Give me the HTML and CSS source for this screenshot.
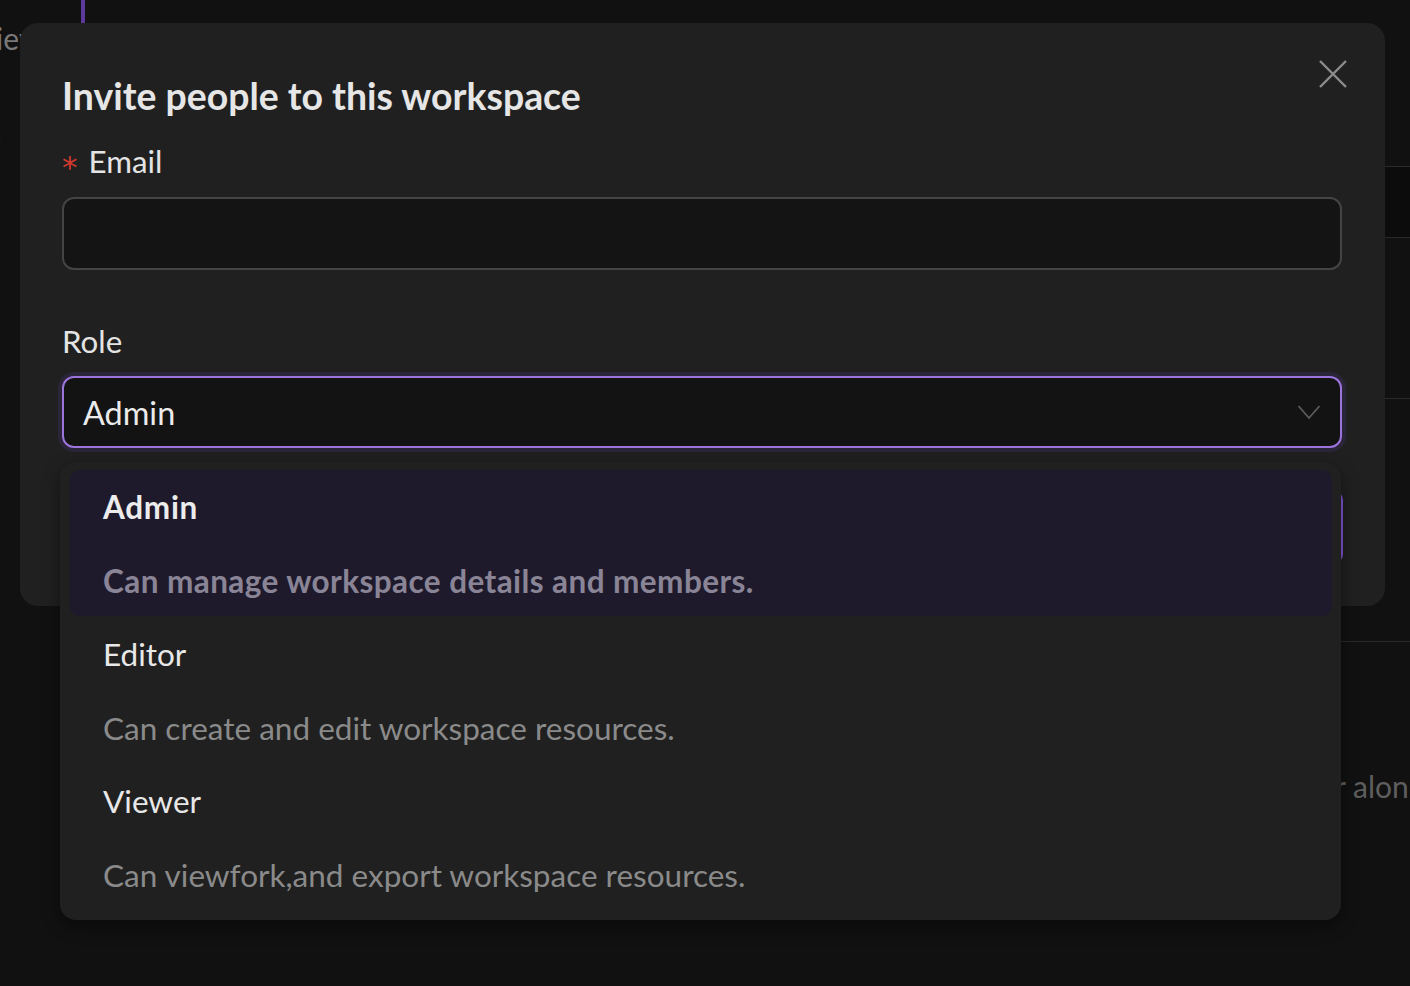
FILE: index.html
```html
<!DOCTYPE html>
<html lang="en">
<head>
<meta charset="utf-8">
<title>Invite people</title>
<link rel="stylesheet" href="styles.css">
</head>
<body>
<div class="backdrop">
  <div class="bg-accent"></div>
  <div class="bg-text bg-text-1">iew</div>
  <div class="bg-text bg-text-2">s</div>
  <div class="bg-panel"></div>
  <div class="bg-line bg-line-1"></div>
  <div class="bg-line bg-line-2"></div>
  <div class="bg-text bg-text-3">r alon</div>
</div>

<div class="modal">
  <button class="close" aria-label="Close">
    <svg width="28" height="28" viewBox="0 0 28 28"><path d="M1 1 L27 27 M27 1 L1 27" stroke="#8c8c8c" stroke-width="2.4" fill="none"/></svg>
  </button>
  <h1 class="title">Invite people to this workspace</h1>
  <label class="label"><span class="req">*</span>Email</label>
  <div class="input"></div>
  <label class="label label-role">Role</label>
  <div class="select">
    <span class="select-value">Admin</span>
    <svg class="chevron" width="24" height="16" viewBox="0 0 24 16"><path d="M1.5 2 L12 14 L22.5 2" stroke="#5c5c5c" stroke-width="1.8" fill="none"/></svg>
  </div>
  <button class="submit">Send invite</button>
</div>

<div class="dropdown">
  <div class="option active">
    <div class="opt-title">Admin</div>
    <div class="opt-desc">Can manage workspace details and members.</div>
  </div>
  <div class="option">
    <div class="opt-title">Editor</div>
    <div class="opt-desc">Can create and edit workspace resources.</div>
  </div>
  <div class="option">
    <div class="opt-title">Viewer</div>
    <div class="opt-desc">Can viewfork,and export workspace resources.</div>
  </div>
</div>
</body>
</html>
```

FILE: styles.css
```css
* { box-sizing: border-box; }
html, body {
  margin: 0;
  padding: 0;
  width: 1410px;
  height: 986px;
  overflow: hidden;
  background: #111111;
  font-family: Lato, "Liberation Sans", sans-serif;
  color: #e4e4e4;
}

.backdrop { position: absolute; inset: 0; }
.bg-accent {
  position: absolute; left: 81px; top: 0; width: 4px; height: 30px;
  background: #5b3a9c;
}
.bg-text {
  position: absolute; color: #7a7a7a; font-size: 30px; line-height: 40px;
  white-space: nowrap;
}
.bg-text-1 { left: -4px; top: 18px; }
.bg-text-2 { left: -12px; top: 112px; }
.bg-text-3 { left: 1335px; top: 766px; color: #5e5e5e; }
.bg-panel {
  position: absolute; left: 1300px; top: 166px; width: 110px; height: 72px;
  background: #0c0c0c;
  border-top: 1px solid #2a2a2a; border-bottom: 1px solid #2a2a2a;
}
.bg-line { position: absolute; left: 1300px; width: 110px; height: 1px; background: #2a2a2a; }
.bg-line-1 { top: 398px; }
.bg-line-2 { top: 641px; }

.modal {
  position: absolute;
  left: 20px; top: 23px;
  width: 1365px; height: 583px;
  background: #202020;
  border-radius: 18px;
  padding: 50px 43px 40px 42px;
  display: flex;
  flex-direction: column;
}
.close {
  position: absolute; right: 38px; top: 37px;
  width: 28px; height: 28px; padding: 0;
  background: none; border: 0;
}
.close svg { display: block; }
.title {
  margin: 0;
  font-size: 37.4px;
  line-height: 46px;
  font-weight: 700;
  color: #e6e6e6;
}
.label {
  display: block;
  margin-top: 22px;
  font-size: 31.3px;
  line-height: 40px;
  color: #e4e4e4;
}
.req {
  color: #d4392f; margin-right: 11px; font-size: 31px;
  font-family: "DejaVu Sans", sans-serif;
  vertical-align: -5px;
  line-height: 0;
}
.label-role { margin-top: 51px; }
.input {
  margin-top: 16px;
  height: 73px;
  background: #141414;
  border: 2px solid #444444;
  border-radius: 12px;
}
.select {
  margin-top: 15px;
  height: 72px;
  background: #131313;
  border: 2px solid #9b74dc;
  border-radius: 12px;
  box-shadow: 0 0 0 4px #2b2539;
  display: flex;
  align-items: center;
  justify-content: space-between;
  padding: 0 19px 0 19px;
}
.select-value { font-size: 32.4px; color: #ebebeb; }
.chevron { display: block; }
.submit {
  margin-top: 42px;
  margin-right: -1px;
  height: 74px;
  border: 0;
  border-radius: 10px;
  background: #8356d8;
  color: #fff;
  font: inherit;
  font-size: 28px;
}

.dropdown {
  position: absolute;
  left: 60px; top: 462px;
  width: 1281px; height: 458px;
  background: #202020;
  border-radius: 16px;
  padding: 8px 9px 8px 10px;
  box-shadow: 0 6px 18px rgba(0,0,0,0.45);
  display: flex;
  flex-direction: column;
  gap: 1px;
}
.option {
  padding: 12px 33px 10px 33px;
  border-radius: 9px;
}
.option.active { background: #1e1a2c; }
.opt-title {
  font-size: 31.5px;
  line-height: 50px;
  color: #e8e8e8;
}
.opt-desc {
  margin-top: 24px;
  font-size: 31.5px;
  line-height: 50px;
  color: #8a8a8a;
}
.option.active .opt-title { font-weight: 700; color: #ececec; letter-spacing: 0.7px; }
.option.active .opt-desc { font-weight: 700; color: #8a8596; letter-spacing: 0.42px; }
```
